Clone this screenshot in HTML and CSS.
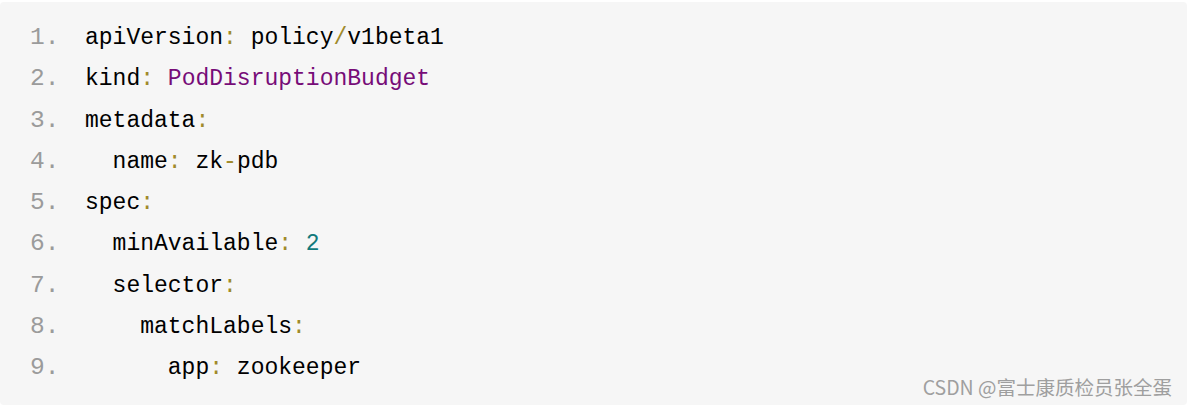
FILE: index.html
```html
<!DOCTYPE html>
<html lang="zh-CN">
<head>
<meta charset="utf-8">
<title>PodDisruptionBudget</title>
<link rel="stylesheet" href="styles.css">
</head>
<body>
<div class="code-block">
  <ol class="code">
    <li><span class="ln">1.</span><span class="src">apiVersion<span class="p">:</span> policy<span class="p">/</span>v1beta1</span></li>
    <li><span class="ln">2.</span><span class="src">kind<span class="p">:</span> <span class="str">PodDisruptionBudget</span></span></li>
    <li><span class="ln">3.</span><span class="src">metadata<span class="p">:</span></span></li>
    <li><span class="ln">4.</span><span class="src">  name<span class="p">:</span> zk<span class="p">-</span>pdb</span></li>
    <li><span class="ln">5.</span><span class="src">spec<span class="p">:</span></span></li>
    <li><span class="ln">6.</span><span class="src">  minAvailable<span class="p">:</span> <span class="num">2</span></span></li>
    <li><span class="ln">7.</span><span class="src">  selector<span class="p">:</span></span></li>
    <li><span class="ln">8.</span><span class="src">    matchLabels<span class="p">:</span></span></li>
    <li><span class="ln">9.</span><span class="src">      app<span class="p">:</span> zookeeper</span></li>
  </ol>
  <div class="watermark">CSDN @富士康质检员张全蛋</div>
</div>
</body>
</html>
```
FILE: styles.css
```css
html, body {
  margin: 0;
  padding: 0;
  background: #ffffff;
}
body {
  padding-top: 2px;
}
.code-block {
  position: relative;
  box-sizing: border-box;
  height: 403px;
  background: #f6f6f6;
  border-radius: 4px;
  padding: 16px 0 0 30px;
}
.code {
  list-style: none;
  margin: 0;
  padding: 0;
  font-family: "Liberation Mono", "DejaVu Sans Mono", monospace;
  font-size: 23px;
  line-height: 41.25px;
  color: #000000;
}
.code li {
  display: flex;
  align-items: baseline;
  height: 41.25px;
  white-space: pre;
}
.ln {
  width: 55px;
  flex: none;
  font-size: 24.5px;
  line-height: 30px;
  color: #9b9b9b;
}
.p {
  color: #a08a2a;
}
.str {
  color: #770c78;
}
.num {
  color: #127a7c;
}
.watermark {
  position: absolute;
  right: 15px;
  bottom: 4px;
  font-family: "Noto Sans CJK SC", "Liberation Sans", sans-serif;
  font-size: 19.5px;
  line-height: 28px;
  color: #9f9f9f;
}
```
